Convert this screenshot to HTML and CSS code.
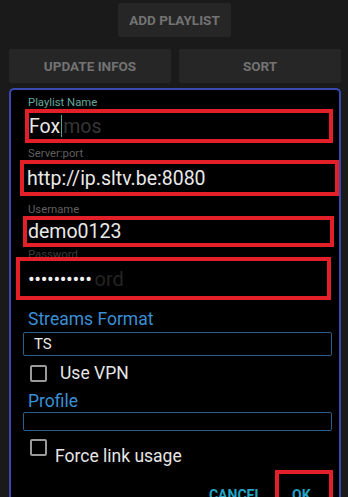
FILE: index.html
```html
<!DOCTYPE html>
<html lang="en">
<head>
  <meta charset="UTF-8">
  <title>Add Playlist</title>
  <link rel="stylesheet" href="styles.css">
</head>
<body>
  <div class="top-bar">
    <button class="btn btn-add">ADD PLAYLIST</button>
  </div>
  <div class="btn-row">
    <button class="btn">UPDATE INFOS</button>
    <button class="btn">SORT</button>
  </div>

  <div class="dialog">
    <div class="label label-focus lbl-name">Playlist Name</div>
    <div class="field field-name">
      <span class="value">Fox</span><span class="cursor"></span><span class="hint">mos</span>
    </div>

    <div class="label lbl-server">Server:port</div>
    <div class="field field-server">
      <span class="value">http://ip.sltv.be:8080</span>
    </div>

    <div class="label lbl-user">Username</div>
    <div class="field field-user">
      <span class="value">demo0123</span>
    </div>

    <div class="label label-dim lbl-pass">Password</div>
    <div class="field field-pass">
      <span class="dots">••••••••••</span><span class="hint hint-pass">ord</span>
    </div>

    <div class="section">Streams Format</div>
    <div class="select">TS</div>

    <label class="check-row check-vpn">
      <span class="checkbox"></span>
      <span>Use VPN</span>
    </label>

    <div class="section section-profile">Profile</div>
    <div class="select select-empty"></div>

    <label class="check-row check-force">
      <span class="checkbox"></span>
      <span class="force-text">Force link usage</span>
    </label>

    <div class="actions">
      <span class="action">CANCEL</span>
      <span class="action action-ok">OK</span>
    </div>
  </div>
</body>
</html>
```

FILE: styles.css
```css
:root {
  --bg: #1a1a1a;
  --btn: #262626;
  --btn-text: #737373;
  --red: #e3202a;
  --blue: #3a8fd6;
  --teal: #22a5c6;
  --frame: #3a48b0;
}

body {
  margin: 0;
  width: 348px;
  height: 497px;
  overflow: hidden;
  background: var(--bg);
  font-family: Roboto, "Liberation Sans", sans-serif;
  color: #e6e6e6;
}

.btn {
  height: 34px;
  border: none;
  border-radius: 2px;
  background: var(--btn);
  color: var(--btn-text);
  font-family: Roboto, sans-serif;
  font-weight: 700;
  font-size: 13.5px;
  padding: 0;
}

.top-bar {
  display: flex;
  justify-content: center;
  padding-top: 3px;
  padding-left: 1px;
}

.btn-add {
  width: 113px;
}

.btn-row {
  display: grid;
  grid-template-columns: 162px 162px;
  gap: 8px;
  padding: 12px 0 0 9px;
}

.dialog {
  margin: 5px 7px 0 9px;
  height: 420px;
  background: #000;
  border: 2px solid var(--frame);
  border-bottom: none;
  border-radius: 5px 5px 0 0;
  padding-top: 7px;
}

.label {
  font-size: 11.3px;
  line-height: 12px;
  height: 12px;
  color: #5f5f5f;
  margin-left: 17px;
}

.label-focus {
  color: #63a89c;
}

.label-dim {
  color: #3c3c3c;
}

.field {
  border: 4px solid var(--red);
  display: flex;
  align-items: center;
  box-sizing: border-box;
  font-size: 19.5px;
}

.value {
  color: #e8e8e8;
}

.hint {
  color: #363636;
}

.cursor {
  width: 1px;
  height: 22px;
  background: #4ea597;
  margin: 0 1px;
}

.field-name {
  margin-left: 14px;
  width: 308px;
  height: 34px;
}

.lbl-server {
  margin-top: 5px;
}

.field-server {
  margin-left: 9px;
  width: 319px;
  height: 36px;
  padding-left: 3px;
}

.lbl-user {
  margin-top: 8px;
}

.field-user {
  margin-left: 12px;
  width: 311px;
  height: 31px;
  padding-left: 1px;
}

.lbl-pass {
  height: 10px;
  line-height: 16px;
  overflow: hidden;
}

.field-pass {
  margin-left: 5px;
  width: 315px;
  height: 43px;
  padding-left: 8px;
}

.dots {
  font-size: 20px;
  letter-spacing: -0.4px;
  color: #f0f0f0;
}

.hint-pass {
  font-size: 20px;
  color: #242424;
  margin-left: 3px;
}

.section {
  margin: 9px 0 0 17px;
  font-size: 17.5px;
  line-height: 20px;
  color: var(--blue);
}

.select {
  margin: 3px 0 0 12px;
  width: 309px;
  height: 24px;
  box-sizing: border-box;
  border: 1px solid #2d5f8e;
  border-radius: 2px;
  font-size: 15px;
  line-height: 22px;
  padding-left: 10px;
  color: #e8e8e8;
}

.select-empty {
  height: 19px;
  margin-top: 1px;
}

.check-row {
  display: flex;
  align-items: center;
  margin-left: 19px;
  font-size: 17.5px;
  color: #e6e6e6;
}

.check-vpn {
  margin-top: 7px;
  gap: 13px;
}

.checkbox {
  width: 13px;
  height: 13px;
  border: 2px solid #9a9a9a;
  border-radius: 2px;
}

.section-profile {
  margin-top: 8px;
}

.check-force {
  margin-top: 8px;
  gap: 8px;
  align-items: flex-start;
}

.force-text {
  margin-top: 7px;
}

.actions {
  display: flex;
  justify-content: flex-end;
  align-items: flex-end;
  margin-top: 4px;
  padding-right: 6px;
}

.action {
  color: var(--teal);
  font-weight: 700;
  font-size: 14px;
  line-height: 14px;
}

.action-ok {
  margin-left: 13px;
  width: 58px;
  height: 32px;
  border: 4px solid var(--red);
  border-bottom: none;
  box-sizing: border-box;
  padding: 14px 0 0 13px;
}
```
